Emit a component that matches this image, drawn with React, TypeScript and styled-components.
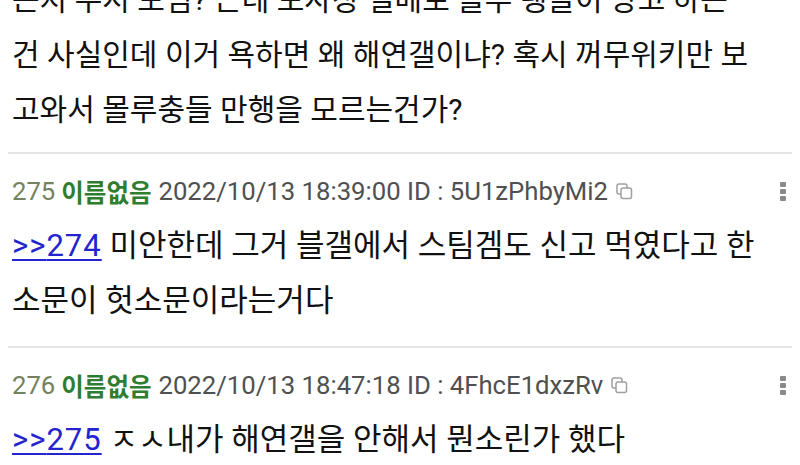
import React from 'react';
import styled, { createGlobalStyle } from 'styled-components';

const GlobalStyle = createGlobalStyle`
  html, body {
    margin: 0;
    padding: 0;
    background: #fff;
    overflow: hidden;
  }
  body {
    font-family: Roboto, "Noto Sans CJK KR", sans-serif;
    color: #111;
  }
`;

const Thread = styled.div`
  padding: 0 8px;
  height: 465px;
  overflow: hidden;
`;

const Post = styled.div<{ $cut?: boolean }>`
  padding: ${(p) => (p.$cut ? '0 4px 15px' : '22px 4px 18px')};
  border-bottom: 2px solid #e6e6e6;
`;

const PostHeader = styled.div`
  display: flex;
  align-items: center;
  height: 30px;
  font-size: 25.7px;
  white-space: nowrap;
`;

const Num = styled.span`
  color: #74825e;
  margin-right: 6px;
`;

const Name = styled.span`
  color: #2f7d31;
  font-weight: 700;
  font-size: 24.5px;
  margin-right: 7px;
`;

const Meta = styled.span`
  color: #505050;
`;

const CopyButton = styled.span`
  display: inline-flex;
  margin-left: 8px;
  color: #a0a0a0;
`;

const Kebab = styled.span`
  margin-left: auto;
  margin-right: 2px;
  display: flex;
  flex-direction: column;
  gap: 2px;
  & > i {
    width: 6px;
    height: 5px;
    border-radius: 1px;
    background: #8a8a8a;
  }
`;

const Body = styled.p<{ $cut?: boolean }>`
  margin: ${(p) => (p.$cut ? '-28px 0 0' : '12px 0 0')};
  font-size: ${(p) => (p.$cut ? '30px' : '31px')};
  line-height: 55px;
  white-space: nowrap;
`;

const Line = styled.span`
  display: block;
`;

const Anchor = styled.a`
  color: #2323d0;
  letter-spacing: 1px;
  text-decoration: underline;
  text-underline-offset: 3px;
  text-decoration-thickness: 2px;
`;

const CopyIcon = () => (
  <svg width="17" height="17" viewBox="0 0 17 17" fill="none" stroke="currentColor" strokeWidth="1.5">
    <rect x="1" y="1" width="10" height="10" rx="2" />
    <rect x="5" y="5" width="10.5" height="10.5" rx="2" fill="#fff" />
  </svg>
);

type Reply = {
  no: number;
  date: string;
  id: string;
  ref: number;
  lines: string[];
};

const opening = [
  '는지 무시 보임? 근데 모사장 일베로 블루 탱들이 망고 하는',
  '건 사실인데 이거 욕하면 왜 해연갤이냐? 혹시 꺼무위키만 보',
  '고와서 몰루충들 만행을 모르는건가?',
];

const replies: Reply[] = [
  {
    no: 275,
    date: '2022/10/13 18:39:00',
    id: '5U1zPhbyMi2',
    ref: 274,
    lines: ['미안한데 그거 블갤에서 스팀겜도 신고 먹였다고 한', '소문이 헛소문이라는거다'],
  },
  {
    no: 276,
    date: '2022/10/13 18:47:18',
    id: '4FhcE1dxzRv',
    ref: 275,
    lines: ['ㅈㅅ내가 해연갤을 안해서 뭔소린가 했다'],
  },
];

const App = () => {
  return (
    <Thread>
      <GlobalStyle />
      <Post $cut>
        <Body $cut>
          {opening.map((l, i) => (
            <Line key={i}>{l}</Line>
          ))}
        </Body>
      </Post>
      {replies.map((r) => (
        <Post key={r.no}>
          <PostHeader>
            <Num>{r.no}</Num>
            <Name>이름없음</Name>
            <Meta>
              {r.date} ID : {r.id}
            </Meta>
            <CopyButton>
              <CopyIcon />
            </CopyButton>
            <Kebab>
              <i />
              <i />
              <i />
            </Kebab>
          </PostHeader>
          <Body>
            {r.lines.map((l, i) => (
              <Line key={i}>
                {i === 0 && (
                  <>
                    <Anchor href="#">&gt;&gt;{r.ref}</Anchor>{' '}
                  </>
                )}
                {l}
              </Line>
            ))}
          </Body>
        </Post>
      ))}
    </Thread>
  );
};

export default App;
